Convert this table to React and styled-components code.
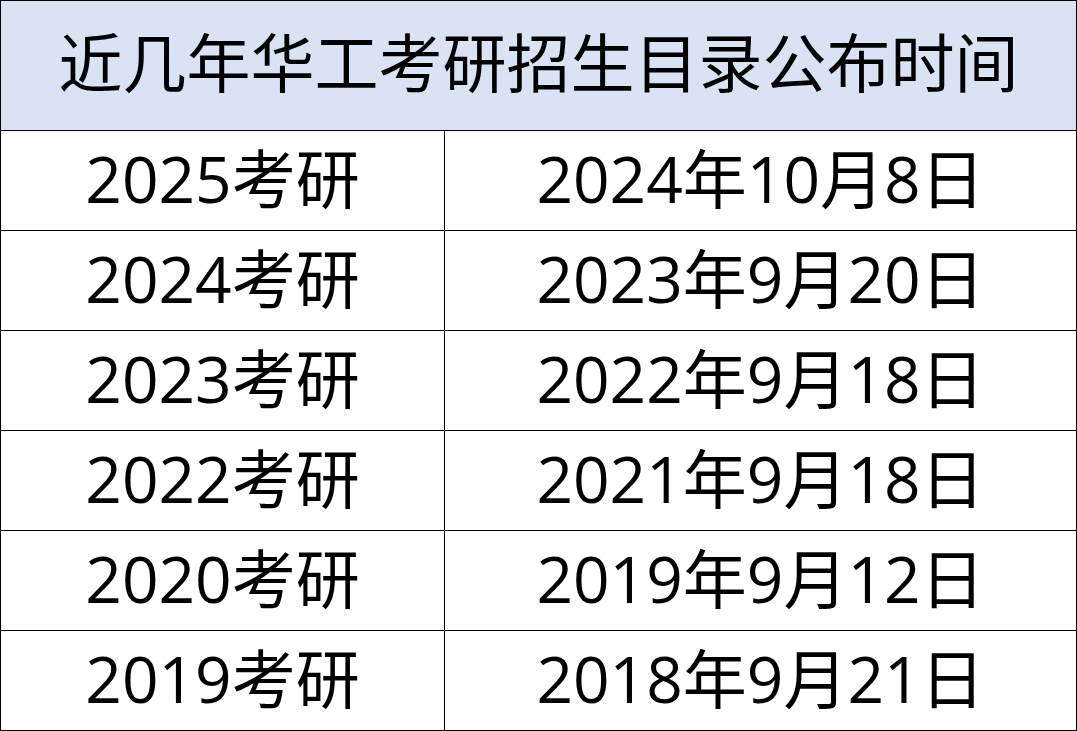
import React from 'react'
import styled, { createGlobalStyle } from 'styled-components'

const GlobalStyle = createGlobalStyle`
  html, body {
    margin: 0;
    padding: 0;
    background: #fff;
  }
`;

const StyledTable = styled.div`
  width: 1077px;
  height: 731px;
  box-sizing: border-box;
  border: 1px solid #000;
  display: grid;
  grid-template-columns: 444px 1fr;
  grid-template-rows: 130px repeat(6, 100px);
  font-family: "Open Sans", "Noto Sans CJK SC", sans-serif;
  color: #000;
  overflow: hidden;
`;

const Title = styled.div`
  grid-column: 1 / -1;
  background: #dae3f3;
  border-bottom: 1px solid #000;
  display: flex;
  align-items: center;
  justify-content: center;
  font-size: 64px;
  line-height: 1;
  padding-bottom: 6px;
`;

const Cell = styled.div`
  display: flex;
  align-items: center;
  justify-content: center;
  font-size: 64px;
  line-height: 1;
  box-sizing: border-box;
  border-bottom: ${({ $last }) => ($last ? 'none' : '1px solid #000')};
  border-right: ${({ $first }) => ($first ? '1px solid #000' : 'none')};
  padding-bottom: 4px;
`;

const rows = [
  ['2025考研', '2024年10月8日'],
  ['2024考研', '2023年9月20日'],
  ['2023考研', '2022年9月18日'],
  ['2022考研', '2021年9月18日'],
  ['2020考研', '2019年9月12日'],
  ['2019考研', '2018年9月21日'],
]

const App = () => {
  return (
    <>
      <GlobalStyle />
      <StyledTable>
        <Title>近几年华工考研招生目录公布时间</Title>
        {rows.map(([year, date], i) => (
          <React.Fragment key={year}>
            <Cell $first $last={i === rows.length - 1}>{year}</Cell>
            <Cell $last={i === rows.length - 1}>{date}</Cell>
          </React.Fragment>
        ))}
      </StyledTable>
    </>
  )
}

export default App;
